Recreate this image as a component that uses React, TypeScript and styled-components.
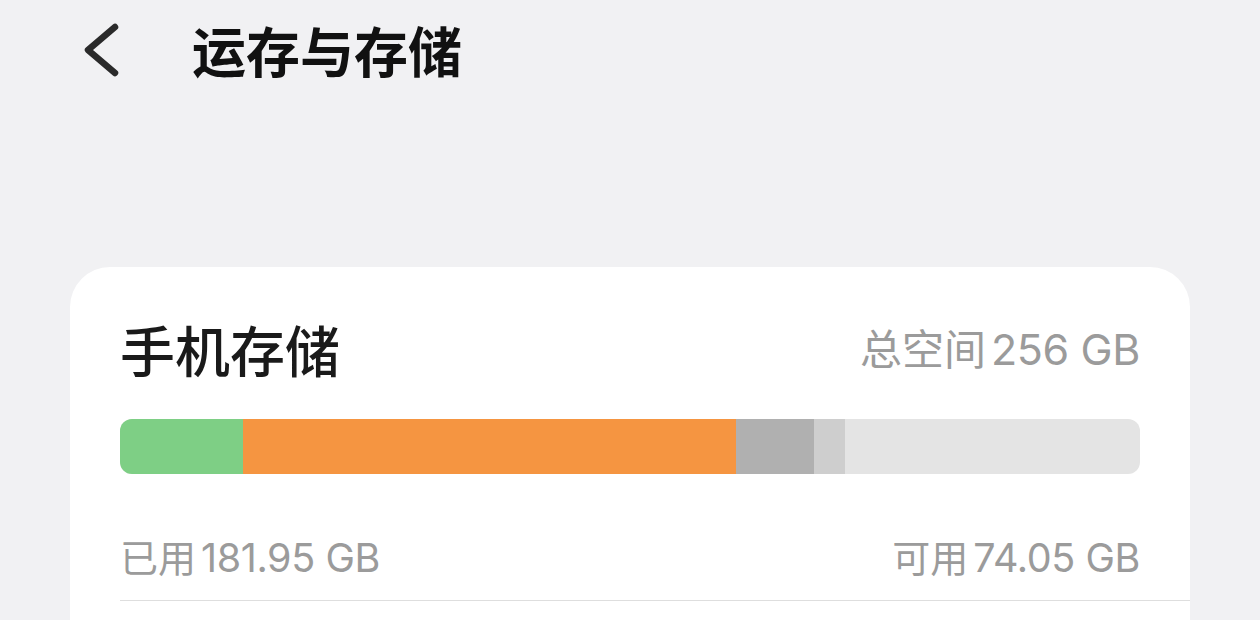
import React from 'react';
import styled, { createGlobalStyle } from 'styled-components';

const GlobalStyle = createGlobalStyle`
  html, body {
    margin: 0;
    padding: 0;
    background: #f1f1f3;
    font-family: "Noto Sans CJK SC", "Noto Sans", sans-serif;
  }
`;

const TOTAL = 256;

const segments = [
  { key: 'apps', gb: 30.8, color: '#7ecf85' },
  { key: 'media', gb: 123.75, color: '#f59541' },
  { key: 'system', gb: 19.6, color: '#b0b0b0' },
  { key: 'other', gb: 7.8, color: '#cecece' }
];

const Page = styled.div`
  width: 1260px;
  height: 620px;
  overflow: hidden;
`;

const Header = styled.header`
  display: flex;
  align-items: center;
  height: 100px;
  padding-left: 82px;
  gap: 70px;
`;

const BackButton = styled.button`
  display: flex;
  padding: 0;
  border: 0;
  background: none;
  cursor: pointer;
`;

const Title = styled.h1`
  margin: 0;
  font-size: 54px;
  line-height: 60px;
  font-weight: 700;
  color: #111;
`;

const Card = styled.section`
  margin: 167px 0 0 70px;
  width: 1120px;
  padding: 51px 0 80px 50px;
  box-sizing: border-box;
  background: #fff;
  border-radius: 40px;
`;

const Row = styled.div<{ $top?: number }>`
  display: flex;
  justify-content: space-between;
  align-items: center;
  padding-right: 50px;
  margin-top: ${p => p.$top ?? 0}px;
`;

const CardTitle = styled.h2`
  margin: 0;
  font-size: 55px;
  line-height: 60px;
  font-weight: 500;
  color: #1a1a1a;
`;

const Stat = styled.span<{ $size: number }>`
  display: flex;
  align-items: baseline;
  font-size: ${p => p.$size}px;
  line-height: 50px;
  color: #9b9b9b;
`;

const Num = styled.span<{ $size: number }>`
  margin-left: 5px;
  font-family: Inter, "Noto Sans CJK SC", sans-serif;
  font-size: ${p => p.$size}px;
  letter-spacing: -0.4px;
`;

const Bar = styled.div`
  display: flex;
  height: 55px;
  margin: 41px 50px 0 0;
  border-radius: 12px;
  overflow: hidden;
  background: #e4e4e4;
`;

const Segment = styled.div<{ $color: string }>`
  height: 100%;
  background: ${p => p.$color};
`;

const Divider = styled.hr`
  margin: 17px 0 0;
  border: 0;
  border-top: 1.5px solid #dedede;
`;

const App: React.FC = () => (
  <Page>
    <GlobalStyle />
    <Header>
      <BackButton aria-label="返回">
        <svg width="40" height="60" viewBox="0 0 40 60">
          <path
            d="M33 7 L6 30 L33 53"
            fill="none"
            stroke="#2a2a2a"
            strokeWidth="6.5"
            strokeLinecap="round"
            strokeLinejoin="round"
          />
        </svg>
      </BackButton>
      <Title>运存与存储</Title>
    </Header>
    <Card>
      <Row>
        <CardTitle>手机存储</CardTitle>
        <Stat $size={42}>
          总空间<Num $size={43}>256 GB</Num>
        </Stat>
      </Row>
      <Bar>
        {segments.map(s => (
          <Segment
            key={s.key}
            $color={s.color}
            style={{ width: `${(s.gb / TOTAL) * 100}%` }}
          />
        ))}
      </Bar>
      <Row $top={57}>
        <Stat $size={38}>
          已用<Num $size={39.5}>181.95 GB</Num>
        </Stat>
        <Stat $size={38}>
          可用<Num $size={39.5}>74.05 GB</Num>
        </Stat>
      </Row>
      <Divider />
    </Card>
  </Page>
);

export default App;
